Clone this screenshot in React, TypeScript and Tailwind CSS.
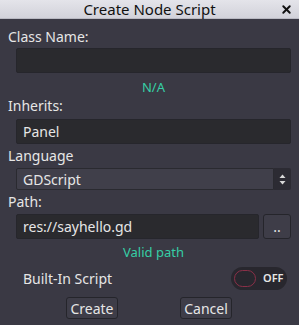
import { X } from "lucide-react";

const font = { fontFamily: '"Noto Sans", "Open Sans", sans-serif' };

function Field({ value, className = "" }: { value?: string; className?: string }) {
  return (
    <div
      className={`flex h-[25px] items-center rounded-[2px] border border-[#26262c] bg-[#2a2a2e] px-[6px] text-[14px] text-[#e6e6e6] ${className}`}
    >
      {value}
    </div>
  );
}

function Button({ label, className = "" }: { label: string; className?: string }) {
  return (
    <div
      className={`flex h-[22px] items-center justify-center rounded-[3px] border border-[#25252b] bg-[#3e3d48] text-[14px] text-[#e6e6e6] ${className}`}
    >
      {label}
    </div>
  );
}

export default function App() {
  return (
    <div className="flex h-[325px] w-[299px] flex-col overflow-hidden bg-[#3a3944]" style={font}>
      {/* title bar */}
      <div className="relative flex h-[19px] shrink-0 items-center justify-center border-b border-[#b9b9c2] bg-gradient-to-b from-[#e4e4ea] to-[#d2d2da]">
        <span className="text-[15px] leading-none text-[#111]">Create Node Script</span>
        <X className="absolute right-[6px] top-[3px] h-[13px] w-[13px] text-[#111]" strokeWidth={3.5} />
      </div>

      <div className="flex flex-col px-[8px]">
        <div className="mt-[10px] text-[14px] leading-[16px] text-[#e6e6e6]">Class Name:</div>
        <div className="mt-[3px] pl-[8px]">
          <Field />
        </div>
        <div className="mt-[6px] pl-[8px] text-center text-[13px] leading-[16px] text-[#36cfa6]">N/A</div>

        <div className="mt-[3px] text-[14px] leading-[16px] text-[#e6e6e6]">Inherits:</div>
        <div className="mt-[5px] pl-[8px]">
          <Field value="Panel" />
        </div>

        <div className="mt-[4px] text-[14px] leading-[16px] text-[#e6e6e6]">Language</div>
        <div className="mt-[4px] flex h-[22px] pl-[8px]">
          <div className="flex flex-1 items-center rounded-l-[2px] border border-[#2a2a30] bg-[#403f4a] px-[6px] text-[14px] text-[#e6e6e6]">
            GDScript
          </div>
          <div className="flex w-[17px] items-center justify-center rounded-r-[2px] bg-[#2c2b33]">
            <svg width="7" height="11" viewBox="0 0 7 11">
              <path d="M3.5 0.5 L6.5 4 H0.5 Z" fill="#d8d8d8" />
              <path d="M3.5 10.5 L6.5 7 H0.5 Z" fill="#d8d8d8" />
            </svg>
          </div>
        </div>

        <div className="mt-[4px] text-[14px] leading-[16px] text-[#e6e6e6]">Path:</div>
        <div className="mt-[4px] flex gap-[4px] pl-[8px]">
          <Field value="res://sayhello.gd" className="flex-1 border-[#3f5d7c]" />
          <Button label=".." className="h-[25px] w-[28px]" />
        </div>
        <div className="mt-[5px] pl-[8px] text-center text-[13px] leading-[16px] text-[#36cfa6]">Valid path</div>

        <div className="mt-[7px] flex items-center justify-between pl-[15px] pr-[4px]">
          <span className="text-[14px] text-[#e6e6e6]">Built-In Script</span>
          <div className="flex h-[23px] w-[56px] items-center rounded-full bg-[#28272e] pl-[3px]">
            <div className="h-[17px] w-[22px] rounded-full border border-[#8a3048]" />
            <span className="ml-[7px] text-[11px] font-semibold text-[#e6e6e6]">OFF</span>
          </div>
        </div>

        <div className="mt-[7px] flex">
          <Button label="Create" className="ml-[58px] w-[52px]" />
          <Button label="Cancel" className="ml-[62px] w-[52px]" />
        </div>
      </div>
    </div>
  );
}
